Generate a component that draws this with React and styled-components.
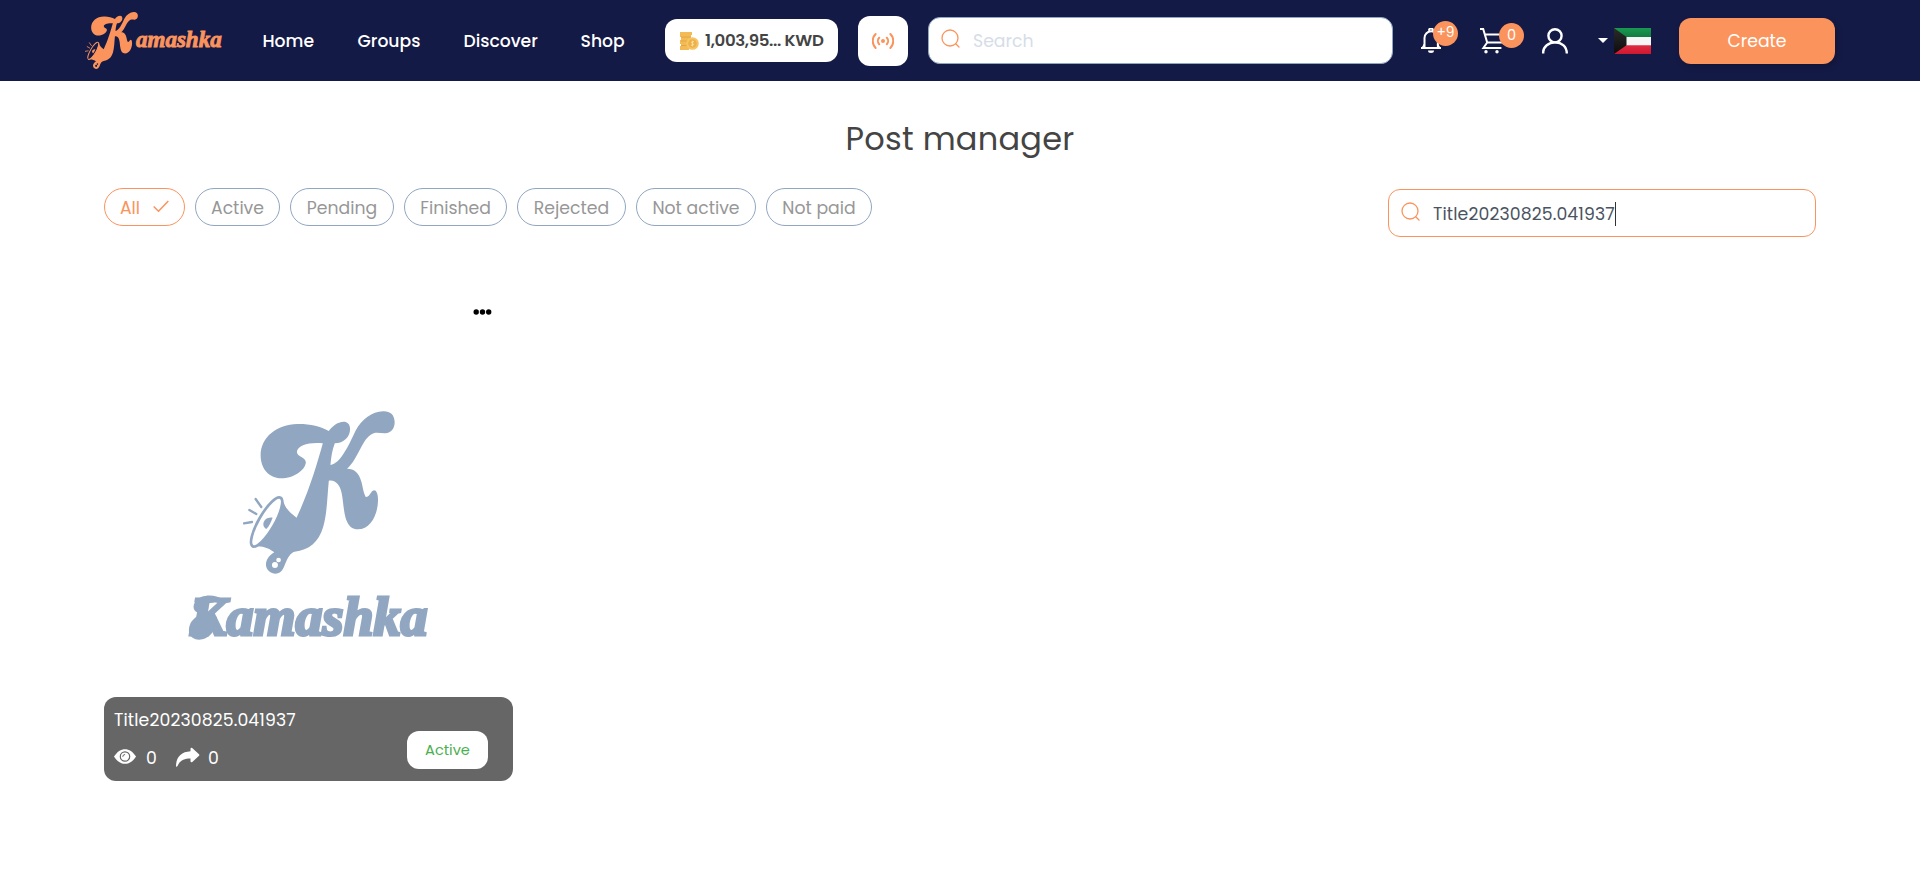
import React from "react";
import styled, { createGlobalStyle } from "styled-components";

const ORANGE = "#fb935d";
const NAVY = "#141a46";
const STEEL = "#91a6c0";

const GlobalStyle = createGlobalStyle`
  * { box-sizing: border-box; }
  body { margin: 0; background: #fff; overflow: hidden; }
  body, button, input { font-family: Poppins, Inter, "Liberation Sans", sans-serif; font-size: 16px; }
`;

const Text = styled.span`
  display: block;
  white-space: nowrap;
  font-size: ${(p) => p.$size || 17.25}px;
  line-height: 24px;
  font-weight: ${(p) => p.$weight || 400};
  color: ${(p) => p.$color || "#fff"};
  letter-spacing: ${(p) => p.$track || 0}px;
`;

const Header = styled.header`
  display: flex;
  align-items: center;
  height: 81px;
  padding: 0 85px;
  background: ${NAVY};
`;

const Brand = styled.a`
  display: flex;
  width: 177.5px;
  height: 57px;
  margin-top: -1px;
`;

const Wordmark = styled.span`
  font-family: "Liberation Serif", serif;
  font-weight: 700;
  font-style: italic;
  white-space: nowrap;
  font-size: ${(p) => p.$size}px;
  line-height: 1;
  letter-spacing: ${(p) => p.$track || 0}px;
  color: ${(p) => p.$color};
  -webkit-text-stroke: ${(p) => p.$stroke}px ${(p) => p.$color};
`;

const BrandWord = styled(Wordmark)`
  margin: 16px 0 0 -2px;
`;

const Nav = styled.nav`
  display: grid;
  grid-template-columns: 95px 106px 117px 84.5px;
  padding-top: 1px;
`;

const Wallet = styled.div`
  display: flex;
  align-items: center;
  gap: 6px;
  width: 173px;
  height: 43px;
  padding-left: 15px;
  border-radius: 12px;
  background: #fff;
`;

const LiveButton = styled.button`
  display: grid;
  place-items: center;
  width: 50px;
  height: 50px;
  margin: 0 20px;
  padding: 0;
  border: 0;
  border-radius: 12px;
  background: #fff;
`;

const SearchBox = styled.div`
  display: flex;
  align-items: center;
  width: ${(p) => p.$width}px;
  height: ${(p) => p.$height}px;
  padding: 1px 0 0 12px;
  gap: 13px;
  border: 1px solid ${(p) => p.$border};
  border-radius: 12px;
  background: #fff;
  svg { margin-top: -5px; }
`;

const Field = styled.div`
  display: flex;
  align-items: center;
`;

const Cursor = styled.i`
  width: 1px;
  height: 24px;
  background: #333;
`;

const Tools = styled.div`
  display: flex;
  align-items: center;
  height: 26px;
  margin-left: 28px;
`;

const Tool = styled.div`
  position: relative;
  width: ${(p) => p.$width}px;
  height: 26px;
`;

const Badge = styled.span`
  position: absolute;
  left: ${(p) => p.$left}px;
  top: ${(p) => p.$top}px;
  display: grid;
  place-items: center;
  width: 25px;
  height: 25px;
  border-radius: 50%;
  background: ${ORANGE};
`;

const Create = styled.button`
  display: grid;
  place-items: center;
  width: 156px;
  height: 46px;
  margin-left: 28px;
  padding: 1px 0 0;
  border: 0;
  border-radius: 12px;
  background: ${ORANGE};
  box-shadow: 2px 3px 6px rgba(0, 0, 0, 0.2);
`;

const Main = styled.main`
  padding: 0 104px;
`;

const Title = styled.h1`
  margin: 34px 0 0;
  height: 48px;
  line-height: 48px;
  font-size: 32px;
  font-weight: 400;
  letter-spacing: ${(p) => p.$track}px;
  text-align: center;
  color: #444;
`;

const Controls = styled.div`
  display: flex;
  justify-content: space-between;
  align-items: flex-start;
  padding-top: 25px;
  height: 120px;
`;

const Chips = styled.div`
  display: flex;
  gap: 10px;
`;

const Chip = styled.button`
  display: flex;
  align-items: center;
  justify-content: center;
  gap: 13px;
  width: ${(p) => p.$width}px;
  height: 38px;
  padding: 1px 0 0;
  border: 1px solid ${(p) => (p.$on ? ORANGE : STEEL)};
  border-radius: 19px;
  background: #fff;
  svg { margin-top: -3px; }
`;

const SearchSlot = styled.div`
  padding-top: 1px;
`;

const Card = styled.article`
  display: flex;
  flex-direction: column;
  width: 409px;
  height: 498px;
`;

const Menu = styled.div`
  display: flex;
  justify-content: flex-end;
  height: 6px;
  margin: 26px 21px 0 0;
`;

const Artwork = styled.div`
  flex: 1;
  display: flex;
  flex-direction: column;
  align-items: flex-start;
  padding: 95.5px 0 0 84px;
`;

const ArtMark = styled.div`
  height: 163px;
  padding-left: 54.5px;
`;

const ArtWord = styled(Wordmark)`
  position: relative;
  margin: 16.5px 0 0 2.5px;
`;

const Flourish = styled.svg`
  position: absolute;
  left: -3px;
  top: 4px;
`;

const Caption = styled.footer`
  display: flex;
  justify-content: space-between;
  height: 84px;
  padding: 11px 25px 0 10px;
  border-radius: 12px;
  background: #666;
`;

const Stats = styled.div`
  display: grid;
  grid-template-columns: 32px 30px 32px 20px;
  align-items: center;
  margin-top: 14px;
  svg { margin-top: -3px; }
`;

const Status = styled.div`
  display: grid;
  place-items: center;
  width: 81px;
  height: 38px;
  margin-top: 23px;
  border-radius: 12px;
  background: #fff;
`;

function Mark({ width, height, color, ground }) {
  return (
    <svg width={width} height={height} viewBox="187 32 457 489" preserveAspectRatio="none" style={{ display: "block", flex: "none" }}>
      <path
        fill={color}
        d="M445 92C420 78 385 70 350 71C290 72 240 110 240 165C240 205 265 234 302 234C340 234 374 210 376 186C376 170 349 170 349 154C352 135 385 125 427 129C410 190 385 275 348 352C325 335 310 320 306 292L228 438C250 437 270 447 281 456C262 468 256 480 256 495C258 510 270 520 285 520C305 519 310 500 315 488C322 470 330 458 342 454C385 450 415 425 428 380C440 340 440 290 445 241C465 237 480 255 484 280C492 320 488 386 532 387C570 387 592 345 593 300C593 280 588 270 581 270C570 272 570 290 556 290C545 270 548 240 530 218C520 207 510 205 500 205C530 180 545 120 570 104C585 92 600 100 615 99C632 98 643 85 643 65C642 42 628 32 608 33C575 35 545 55 525 92C505 135 480 190 450 194C452 170 455 150 463 129C490 128 509 110 509 85C508 70 500 64 490 64C470 65 455 78 445 92Z"
      />
      <ellipse cx="258" cy="365" rx="84" ry="24" transform="rotate(-60 258 365)" fill={ground} stroke={color} strokeWidth="8" />
      <path fill={color} d="M276 352C262 349 249 358 248 371C248 378 252 384 257 386C266 377 271 366 276 352Z" />
      <path stroke={color} strokeWidth="7" strokeLinecap="round" d="M225 296L242 320M206 329L227 341M190 369L214 365" />
      <circle cx="294" cy="479" r="7" fill={ground} />
      <circle cx="283" cy="494" r="9" fill={ground} />
    </svg>
  );
}

const CoinsIcon = () => (
  <svg width="19" height="18" viewBox="0 0 19 18">
    <path fill="#f3bb55" d="M0 0h12v3h-1v5H9v10H0v-4h1v-2H0V8h1V5H0z" />
    <path stroke="#dfa040" strokeWidth=".8" d="M1 5h10M1 9h7M1 13.500h6" />
    <circle cx="12.500" cy="11.500" r="6.300" fill="#f6c562" />
    <circle cx="12.500" cy="11.500" r="4.300" fill="#edb04a" />
    <path fill="none" stroke="#fbe09a" d="M14 9.800c-2.500-1-3.600 1-1.500 1.600s1 2.700-1.500 1.700M12.500 8.700v5.600" />
  </svg>
);

const LiveIcon = () => (
  <svg width="22" height="18" viewBox="0 0 22 18" fill="none" stroke={ORANGE} strokeWidth="2" strokeLinecap="round">
    <circle cx="11" cy="9" r="2" fill={ORANGE} stroke="none" />
    <path d="M7.200 5.700a4.800 4.800 0 0 0 0 6.600M14.800 5.700a4.800 4.800 0 0 1 0 6.600M3.600 2a10 10 0 0 0 0 14M18.400 2a10 10 0 0 1 0 14" />
  </svg>
);

const SearchIcon = () => (
  <svg width="19" height="19" viewBox="0 0 19 19" fill="none" stroke={ORANGE} strokeWidth="1.300" strokeLinecap="round">
    <circle cx="9" cy="9" r="8" />
    <path d="M14.700 14.700L18 18" />
  </svg>
);

const BellIcon = () => (
  <svg width="22" height="26" viewBox="0 0 22 26" fill="none" stroke="#fff" strokeWidth="2">
    <path d="M0 20h20M3.500 20V10a6.700 6.700 0 0 1 13.400 0v10M1.500 20c1.300-1.500 1.800-2.500 1.800-4M18.500 20c-1.300-1.500-1.800-2.500-1.800-4M8 2.500a2 2 0 0 1 4 0" />
    <path fill="#fff" stroke="none" d="M7 22.500h6a3 2.500 0 0 1-6 0" />
  </svg>
);

const CartIcon = () => (
  <svg width="28" height="26" viewBox="0 0 28 26" fill="none" stroke="#fff" strokeWidth="2">
    <path d="M0 1h3.200l4 13.500h15L25 6.500H5M7.200 14.500L3.400 20h18" />
    <circle cx="6" cy="23.800" r="1.700" fill="#fff" stroke="none" />
    <circle cx="17" cy="23.800" r="1.700" fill="#fff" stroke="none" />
  </svg>
);

const UserIcon = () => (
  <svg width="26" height="26" viewBox="0 0 26 26" fill="none" stroke="#fff" strokeWidth="2.400">
    <circle cx="13" cy="7.800" r="6.600" />
    <path d="M1.200 25.500V24a11.800 9.800 0 0 1 11.800-9.600c7 0 11.800 4.400 11.800 11.100" />
  </svg>
);

const Flag = () => (
  <svg width="37" height="26" viewBox="0 0 37 26">
    <defs>
      <linearGradient id="green" x2="0" y2="1"><stop stopColor="#189a50" /><stop offset="1" stopColor="#147b40" /></linearGradient>
      <linearGradient id="red" x2="0" y2="1"><stop stopColor="#e02a42" /><stop offset="1" stopColor="#cd1830" /></linearGradient>
      <linearGradient id="black" x2="0" y2="1"><stop stopColor="#2b2b2b" /><stop offset="1" stopColor="#0c0c0c" /></linearGradient>
    </defs>
    <path fill="#f6f6f6" d="M0 0h37v26H0z" />
    <path fill="url(#green)" d="M0 0h37v9H0z" />
    <path fill="url(#red)" d="M0 17.300h37V26H0z" />
    <path fill="url(#black)" d="M0 0l12.500 9v8.300L0 26z" />
  </svg>
);

const CheckIcon = () => (
  <svg width="16" height="13" viewBox="0 0 16 13" fill="none" stroke={ORANGE} strokeWidth="1.500">
    <path d="M.7 6.500L5.500 11.300L15.300 1" />
  </svg>
);

const EyeIcon = () => (
  <svg width="22" height="15" viewBox="0 0 22 15">
    <path fill="#fff" d="M0 7.500C6-2.300 16-2.300 22 7.500C16 17.300 6 17.300 0 7.500Z" />
    <circle cx="11" cy="7.500" r="4.700" fill="#fff" stroke="#666" strokeWidth="1.200" />
    <path fill="none" stroke="#666" d="M8.800 7.800a2.300 2.300 0 0 1 2.300-2.300" />
  </svg>
);

const ShareIcon = () => (
  <svg width="24" height="20" viewBox="0 0 24 20">
    <path fill="#fff" d="M0 19.500C0 10 5 4.800 14.500 4.200V1.500Q15 .2 16.200 1L23 7.200Q23.800 8 23 8.800L16.300 15Q15 15.700 14.500 14.500V11.500C8 11.500 4 13.300 1.500 19Q.7 20 0 19.500Z" />
  </svg>
);

const NAV = ["Home", "Groups", "Discover", "Shop"];
const CHIPS = [["Active", 85], ["Pending", 104], ["Finished", 103], ["Rejected", 109], ["Not active", 120], ["Not paid", 106]];

export default function App() {
  return (
    <>
      <GlobalStyle />
      <Header>
        <Brand>
          <Mark width={53} height={57} color={ORANGE} ground={NAVY} />
          <BrandWord $size={23} $stroke={0.9} $color={ORANGE}>amashka</BrandWord>
        </Brand>
        <Nav>
          {NAV.map((name) => <Text key={name} $size={17.2} $weight={500}>{name}</Text>)}
        </Nav>
        <Wallet>
          <CoinsIcon />
          <Text $size={16.6} $track={-0.35} $weight={600} $color="#444">1,003,95... KWD</Text>
        </Wallet>
        <LiveButton><LiveIcon /></LiveButton>
        <SearchBox $width={465} $height={47} $border={STEEL}>
          <SearchIcon />
          <Text $color="#d6dde8">Search</Text>
        </SearchBox>
        <Tools>
          <Tool $width={59}>
            <BellIcon />
            <Badge $left={12} $top={-7}><Text $size={13.8}>+9</Text></Badge>
          </Tool>
          <Tool $width={62}>
            <CartIcon />
            <Badge $left={19} $top={-5}><Text $size={14.5}>0</Text></Badge>
          </Tool>
          <Tool $width={56}><UserIcon /></Tool>
          <Tool $width={16}>
            <svg width="10" height="26" viewBox="0 0 10 26"><path fill="#fff" d="M0 10h10l-5 5z" /></svg>
          </Tool>
          <Flag />
        </Tools>
        <Create><Text>Create</Text></Create>
      </Header>
      <Main>
        <Title $track={0.25}>Post manager</Title>
        <Controls>
          <Chips>
            <Chip $width={81} $on><Text $color={ORANGE}>All</Text><CheckIcon /></Chip>
            {CHIPS.map(([name, width]) => (
              <Chip key={name} $width={width}><Text $color="#979797">{name}</Text></Chip>
            ))}
          </Chips>
          <SearchSlot>
            <SearchBox $width={428} $height={48} $border={ORANGE}>
              <SearchIcon />
              <Field><Text $color="#4a5360" $track={0.12}>Title20230825.041937</Text><Cursor /></Field>
            </SearchBox>
          </SearchSlot>
        </Controls>
        <Card>
          <Menu>
            <svg width="19" height="6" viewBox="0 0 19 6"><circle cx="3.200" cy="3" r="2.700" /><circle cx="9.500" cy="3" r="2.700" /><circle cx="15.700" cy="3" r="2.700" /></svg>
          </Menu>
          <Artwork>
            <ArtMark><Mark width={152} height={163} color={STEEL} ground="#fff" /></ArtMark>
            <ArtWord $size={54} $stroke={3} $color={STEEL}>
              Kamashka
              <Flourish width="36" height="48" viewBox="0 0 36 48" fill={STEEL}>
                <path d="M34 5C27 0 12 0 7 8C3 15 8 20 14 19C19 18 22 14 19 11C22 8 27 8 33 10Z" />
                <path d="M19 20C7 20 0 29 1 38C3 48 17 48 24 39L29 23Z" />
              </Flourish>
            </ArtWord>
          </Artwork>
          <Caption>
            <div>
              <Text $track={0.12}>Title20230825.041937</Text>
              <Stats><EyeIcon /><Text>0</Text><ShareIcon /><Text>0</Text></Stats>
            </div>
            <Status><Text $size={14.6} $color="#4caf50">Active</Text></Status>
          </Caption>
        </Card>
      </Main>
    </>
  );
}
